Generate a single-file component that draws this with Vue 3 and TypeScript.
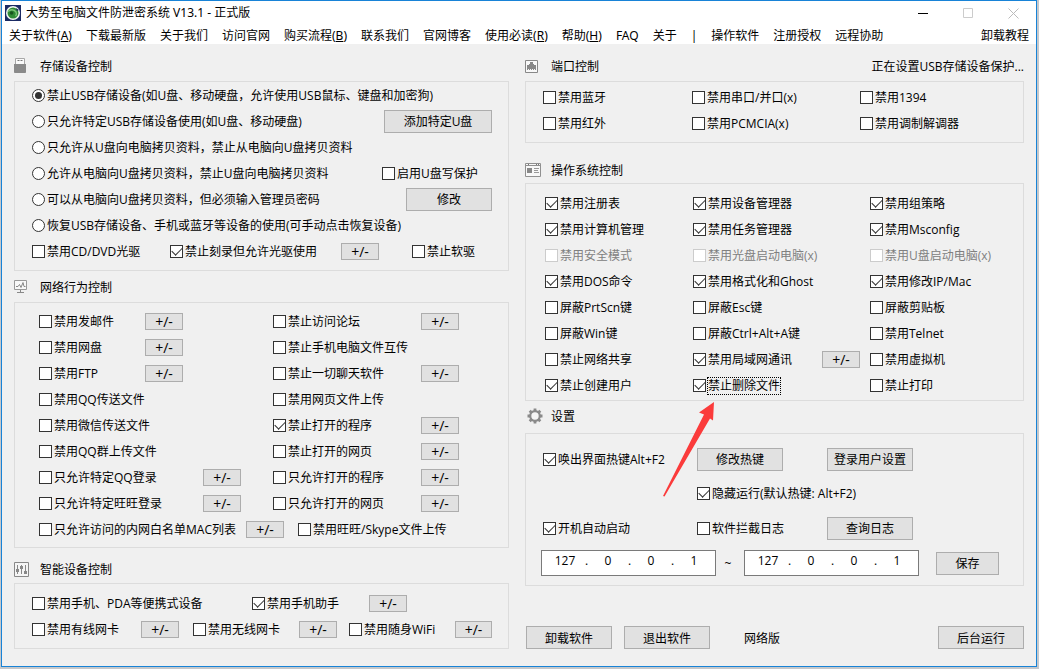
<script setup lang="ts">
import { reactive, ref } from 'vue'

type Kind = 'check' | 'radio' | 'mini' | 'button' | 'ip' | 'tilde'

interface Cell {
  kind: Kind
  label: string
  col: number
  checked: boolean
  disabled?: boolean
  marked?: boolean
  wide?: boolean
  octets?: string[]
}

interface Row {
  layout: string
  cells: Cell[]
}

interface Section {
  id: string
  icon: string
  title: string
  status?: string
  rows: Row[]
}

const check = (label: string, col = 1, checked = false, extra: Partial<Cell> = {}): Cell => ({
  kind: 'check',
  label,
  col,
  checked,
  ...extra,
})
const radio = (label: string): Cell => ({ kind: 'radio', label, col: 1, checked: false })
const mini = (col: number): Cell => ({ kind: 'mini', label: '+/-', col, checked: false })
const button = (label: string, col: number, wide = false): Cell => ({
  kind: 'button',
  label,
  col,
  checked: false,
  wide,
})
const ip = (label: string, col: number): Cell => ({
  kind: 'ip',
  label,
  col,
  checked: false,
  octets: ['127', '0', '0', '1'],
})
const row = (layout: string, ...cells: Cell[]): Row => ({ layout, cells })

const usbMode = ref('禁止USB存储设备(如U盘、移动硬盘，允许使用USB鼠标、键盘和加密狗)')

const columns = reactive<Section[][]>([
  [
    {
      id: 'storage',
      icon: 'usb',
      title: '存储设备控制',
      rows: [
        row('single', radio('禁止USB存储设备(如U盘、移动硬盘，允许使用USB鼠标、键盘和加密狗)')),
        row('trailing', radio('只允许特定USB存储设备使用(如U盘、移动硬盘)'), button('添加特定U盘', 2, true)),
        row('single', radio('只允许从U盘向电脑拷贝资料，禁止从电脑向U盘拷贝资料')),
        row('protect', radio('允许从电脑向U盘拷贝资料，禁止U盘向电脑拷贝资料'), check('启用U盘写保护', 2)),
        row('trailing', radio('可以从电脑向U盘拷贝资料，但必须输入管理员密码'), button('修改', 2)),
        row('single', radio('恢复USB存储设备、手机或蓝牙等设备的使用(可手动点击恢复设备)')),
        row('drives', check('禁用CD/DVD光驱'), check('禁止刻录但允许光驱使用', 2, true), mini(3), check('禁止软驱', 4)),
      ],
    },
    {
      id: 'network',
      icon: 'monitor',
      title: '网络行为控制',
      rows: [
        row('net', check('禁用发邮件'), mini(2), check('禁止访问论坛', 3), mini(4)),
        row('net', check('禁用网盘'), mini(2), check('禁止手机电脑文件互传', 3)),
        row('net', check('禁用FTP'), mini(2), check('禁止一切聊天软件', 3), mini(4)),
        row('net-wide', check('禁用QQ传送文件'), check('禁用网页文件上传', 3)),
        row('net-wide', check('禁用微信传送文件'), check('禁止打开的程序', 3, true), mini(4)),
        row('net-wide', check('禁用QQ群上传文件'), check('禁止打开的网页', 3), mini(4)),
        row('net-wide', check('只允许特定QQ登录'), mini(2), check('只允许打开的程序', 3), mini(4)),
        row('net-wide', check('只允许特定旺旺登录'), mini(2), check('只允许打开的网页', 3), mini(4)),
        row('net-mac', check('只允许访问的内网白名单MAC列表'), mini(2), check('禁用旺旺/Skype文件上传', 3)),
      ],
    },
    {
      id: 'smart',
      icon: 'sliders',
      title: '智能设备控制',
      rows: [
        row('phone', check('禁用手机、PDA等便携式设备'), check('禁用手机助手', 2, true), mini(3)),
        row('cards', check('禁用有线网卡'), mini(2), check('禁用无线网卡', 3), mini(4), check('禁用随身WiFi', 5), mini(6)),
      ],
    },
  ],
  [
    {
      id: 'ports',
      icon: 'port',
      title: '端口控制',
      status: '正在设置USB存储设备保护...',
      rows: [
        row('ports-row', check('禁用蓝牙'), check('禁用串口/并口(x)', 2), check('禁用1394', 3)),
        row('ports-row', check('禁用红外'), check('禁用PCMCIA(x)', 2), check('禁用调制解调器', 3)),
      ],
    },
    {
      id: 'system',
      icon: 'panel',
      title: '操作系统控制',
      rows: [
        row('os', check('禁用注册表', 1, true), check('禁用设备管理器', 2, true), check('禁用组策略', 4, true)),
        row('os', check('禁用计算机管理', 1, true), check('禁用任务管理器', 2, true), check('禁用Msconfig', 4, true)),
        row(
          'os',
          check('禁用安全模式', 1, false, { disabled: true }),
          check('禁用光盘启动电脑(x)', 2, false, { disabled: true }),
          check('禁用U盘启动电脑(x)', 4, false, { disabled: true }),
        ),
        row('os', check('禁用DOS命令', 1, true), check('禁用格式化和Ghost', 2, true), check('禁用修改IP/Mac', 4, true)),
        row('os', check('屏蔽PrtScn键'), check('屏蔽Esc键', 2), check('屏蔽剪贴板', 4)),
        row('os', check('屏蔽Win键'), check('屏蔽Ctrl+Alt+A键', 2), check('禁用Telnet', 4)),
        row('os', check('禁止网络共享'), check('禁用局域网通讯', 2, true), mini(3), check('禁用虚拟机', 4)),
        row('os', check('禁止创建用户', 1, true), check('禁止删除文件', 2, true, { marked: true }), check('禁止打印', 4)),
      ],
    },
    {
      id: 'settings',
      icon: 'gear',
      title: '设置',
      rows: [
        row('config', check('唤出界面热键Alt+F2', 1, true), button('修改热键', 2), button('登录用户设置', 3)),
        row('config', check('隐藏运行(默认热键: Alt+F2)', 2, true)),
        row('config tall', check('开机自动启动', 1, true), check('软件拦截日志', 2), button('查询日志', 3)),
        row(
          'range',
          ip('起始地址', 1),
          { kind: 'tilde', label: '~', col: 2, checked: false },
          ip('结束地址', 3),
          button('保存', 5),
        ),
      ],
    },
  ],
])

const menu: { text: string; key?: string }[] = [
  { text: '关于软件', key: 'A' },
  { text: '下载最新版' },
  { text: '关于我们' },
  { text: '访问官网' },
  { text: '购买流程', key: 'B' },
  { text: '联系我们' },
  { text: '官网博客' },
  { text: '使用必读', key: 'R' },
  { text: '帮助', key: 'H' },
  { text: 'FAQ' },
  { text: '关于' },
  { text: '|' },
  { text: '操作软件' },
  { text: '注册授权' },
  { text: '远程协助' },
]
</script>

<template>
  <div class="desktop">
    <div class="window">
      <header class="titlebar">
        <svg class="app-icon" width="16" height="16" viewBox="0 0 16 16">
          <rect width="16" height="16" fill="#1b2a63" />
          <circle cx="8" cy="8" r="7" fill="#f4f8f4" />
          <circle cx="8" cy="8" r="5.5" fill="#2f8a35" />
          <path d="M3 6.5C5 4 9 4 11 7c.8 1.5.6 3-.4 4.3" fill="none" stroke="#7fc47a" stroke-width="1.4" />
          <circle cx="6.6" cy="8" r="1.8" fill="#17551d" />
          <path d="M11 3l3 2-2 1z" fill="#1b2a63" />
        </svg>
        <h1>大势至电脑文件防泄密系统 V13.1 - 正式版</h1>
        <div class="controls">
          <button type="button" title="最小化">
            <svg width="11" height="11" viewBox="0 0 11 11"><path d="M0 5.5h10" stroke="#000" /></svg>
          </button>
          <button type="button" title="最大化" disabled>
            <svg width="11" height="11" viewBox="0 0 11 11"><path d="M.5.5h9v9h-9z" fill="none" stroke="#ccc" /></svg>
          </button>
          <button type="button" title="关闭">
            <svg width="11" height="11" viewBox="0 0 11 11"><path d="M.5.5l10 10M10.500.5l-10 10" stroke="#bbb" /></svg>
          </button>
        </div>
      </header>

      <nav class="menu">
        <template v-for="item in menu" :key="item.text">
          <span v-if="item.text === '|'">|</span>
          <a v-else href="#">{{ item.text }}<template v-if="item.key">(<u>{{ item.key }}</u>)</template></a>
        </template>
        <a class="last" href="#">卸载教程</a>
      </nav>

      <main class="content">
        <div v-for="(sections, c) in columns" :key="c" class="column">
          <section v-for="section in sections" :key="section.id" :class="section.id">
            <div class="heading">
              <span class="icon">
                <svg v-if="section.icon === 'usb'" width="12" height="16" viewBox="0 0 12 16">
                  <path d="M1.500 6V.5h9V6" fill="#fafafa" stroke="#a8a8a8" />
                  <path d="M3.500 2.500h2M6.500 2.500h2" stroke="#777" />
                  <path d="M0 6h12v8.500l-.8.500H.8L0 14.500z" fill="#8a8a8a" />
                </svg>
                <svg v-else-if="section.icon === 'monitor'" width="14" height="14" viewBox="0 0 14 14">
                  <path d="M.5.5h12v9H.5z" fill="#f8f8f8" stroke="#999" />
                  <path d="M2 6.500h2L5.500 4.500 7 7.500 9 2.500l1 4h1.500" fill="none" stroke="#888" />
                  <path d="M6.500 10v2M3 12.500h7" stroke="#888" />
                </svg>
                <svg v-else-if="section.icon === 'sliders'" width="15" height="15" viewBox="0 0 15 15">
                  <path d="M.5.5h14v14H.5z" fill="#f5f5f5" stroke="#888" />
                  <path d="M3.500 3v9M7.500 3v9M11.500 3v9" stroke="#888" />
                  <path d="M2 7h3v3H2zM6 4h3v3H6zM10 9h3v3h-3z" fill="#888" />
                </svg>
                <svg v-else-if="section.icon === 'port'" width="13" height="13" viewBox="0 0 13 13">
                  <path d="M.5.5h12v12H.5z" fill="#f8f8f8" stroke="#888" />
                  <path d="M2 10V5h2V4h1V2h3v2h1v1h2v5h-1V9H9v1H8V9H7v1H6V9H5v1H4V9H3v1z" fill="#888" />
                </svg>
                <svg v-else-if="section.icon === 'panel'" width="16" height="14" viewBox="0 0 16 14">
                  <path d="M.5.5h15v13H.5z" fill="#f8f8f8" stroke="#909090" />
                  <path d="M1 2.500h14" stroke="#909090" />
                  <path d="M3 1.500h1M11 1.500h1M13 1.500h1" stroke="#777" />
                  <path d="M2 5h5v5H2z" fill="#888" />
                  <path d="M9 5.500h5M9 7.500h4M9 9.500h5" stroke="#999" />
                </svg>
                <svg v-else width="18" height="16" viewBox="-2 0 18 16">
                  <circle cx="8" cy="8" r="4.800" fill="#f5f5f5" stroke="#8a8a8a" stroke-width="2.200" />
                  <path
                    d="M8 .5v2.500M8 13v2.500M.5 8h2.500M13 8h2.500M2.700 2.700l2 2M11.300 11.300l2 2M2.700 13.300l2-2M11.300 4.700l2-2"
                    stroke="#8a8a8a"
                    stroke-width="2.800"
                  />
                </svg>
              </span>
              <h2>{{ section.title }}</h2>
              <p v-if="section.status" class="status">{{ section.status }}</p>
            </div>

            <div class="box">
              <div v-for="(line, r) in section.rows" :key="r" class="row" :class="line.layout">
                <div
                  v-for="cell in line.cells"
                  :key="cell.label + cell.col"
                  class="cell"
                  :class="['col-' + cell.col, { marked: cell.marked }]"
                >
                  <label v-if="cell.kind === 'check'" :class="{ off: cell.disabled }">
                    <input v-model="cell.checked" type="checkbox" :disabled="cell.disabled" />
                    <span>{{ cell.label }}</span>
                  </label>
                  <label v-else-if="cell.kind === 'radio'">
                    <input v-model="usbMode" type="radio" name="usb-mode" :value="cell.label" />
                    <span>{{ cell.label }}</span>
                  </label>
                  <button v-else-if="cell.kind === 'mini'" type="button" class="mini">{{ cell.label }}</button>
                  <button v-else-if="cell.kind === 'button'" type="button" class="push" :class="{ wide: cell.wide }">
                    {{ cell.label }}
                  </button>
                  <div v-else-if="cell.kind === 'ip' && cell.octets" class="ip" role="group" :aria-label="cell.label">
                    <template v-for="(_, i) in cell.octets" :key="i">
                      <span v-if="i > 0">.</span>
                      <input v-model="cell.octets[i]" type="text" maxlength="3" :aria-label="cell.label + (i + 1)" />
                    </template>
                  </div>
                  <span v-else class="tilde">{{ cell.label }}</span>
                  <svg v-if="cell.marked" class="arrow" width="54" height="98" viewBox="0 0 54 98">
                    <path d="M51 1L36 11.500l5 2L0 95l1.500.5L47 17.500l3 2z" fill="#fb3b3b" />
                  </svg>
                </div>
              </div>
            </div>
          </section>

          <footer v-if="c === 1" class="actions">
            <button type="button" class="push">卸载软件</button>
            <button type="button" class="push">退出软件</button>
            <span>网络版</span>
            <button type="button" class="push end">后台运行</button>
          </footer>
        </div>
      </main>
    </div>
  </div>
</template>

<style>
body {
  background: #c6c8cb;
}
</style>

<style scoped>
* {
  box-sizing: border-box;
}

.desktop {
  padding: 0 2px 2px 1px;
  font-family: 'Open Sans', 'Noto Sans CJK SC', sans-serif;
  font-size: 12px;
  line-height: 16px;
  color: #000;
}

.window {
  min-width: 1000px;
  border: 1px solid #1883d7;
  background: #f0f0f0;
  white-space: nowrap;
}

h1,
h2,
p {
  margin: 0;
  font-size: 12px;
  font-weight: 400;
}

button,
input {
  margin: 0;
  padding: 0;
  font: inherit;
  color: inherit;
}

.titlebar,
.menu {
  font-family: 'Noto Sans', 'Noto Sans CJK SC', sans-serif;
}

.titlebar {
  display: flex;
  align-items: center;
  height: 24px;
  padding-left: 3px;
  background: #fff;
}

.app-icon {
  margin-right: 5px;
}

.controls {
  display: flex;
  margin-left: auto;
}

.controls button {
  display: flex;
  align-items: center;
  justify-content: center;
  width: 45px;
  height: 24px;
  border: 0;
  background: none;
}

.menu {
  display: flex;
  align-items: center;
  gap: 14px;
  height: 19px;
  padding: 2px 7px 0;
  background: #fff;
}

.menu a {
  color: #000;
  text-decoration: none;
}

.menu .last {
  margin-left: auto;
}

.content {
  display: grid;
  grid-template-columns: 495fr 499fr;
  gap: 16px;
  padding: 7px 12px 17px;
}

.column {
  display: flex;
  flex-direction: column;
}

.heading {
  display: flex;
  align-items: center;
  height: 30px;
}

.heading h2,
.heading .status {
  padding-top: 2px;
}

.network .heading {
  margin-top: 1px;
}

.smart .heading {
  height: 28px;
  margin-top: 7px;
}

.system .heading {
  height: 26px;
  margin-top: 14px;
}

.settings .heading {
  margin-bottom: 2px;
}

.icon {
  display: flex;
  width: 26px;
}

.status {
  margin-left: auto;
}

.box {
  border: 1px solid #dcdcdc;
}

.storage .box {
  padding: 0 16px 6px 17px;
}

.network .box {
  padding: 5px 16px 5px 24px;
}

.smart .box {
  padding: 6px 16px 6px 17px;
}

.ports .box {
  padding: 2px 12px 6px 17px;
}

.system .box {
  padding: 6px 12px 2px 19px;
}

.settings .box {
  padding: 8px 12px 5px 15px;
}

.row {
  display: grid;
  height: 26px;
}

.cell {
  display: flex;
  align-items: center;
  min-width: 0;
}

.col-1 { grid-column: 1; }
.col-2 { grid-column: 2; }
.col-3 { grid-column: 3; }
.col-4 { grid-column: 4; }
.col-5 { grid-column: 5; }
.col-6 { grid-column: 6; }

.single { grid-template-columns: 1fr; }
.trailing { grid-template-columns: 1fr auto; }
.protect { grid-template-columns: 350fr 110fr; }
.drives { grid-template-columns: 138fr 171fr 71fr 80fr; }
.net { grid-template-columns: 106fr 128fr 148fr 71fr; }
.net-wide { grid-template-columns: 164fr 70fr 148fr 71fr; }
.net-mac { grid-template-columns: 207fr 52fr 194fr; }
.phone { grid-template-columns: 220fr 117fr 123fr; }
.cards { grid-template-columns: 109fr 52fr 106fr 50fr 106fr 37fr; }
.ports-row { grid-template-columns: 149fr 168fr 151fr; }
.os { grid-template-columns: 148fr 129fr 48fr 141fr; }

.config {
  grid-template-columns: 154fr 130fr 184fr;
  height: 34px;
  padding-left: 2px;
}

.tall {
  height: 36px;
}

.range {
  grid-template-columns: 175fr 28fr 175fr 17fr 75fr;
  height: 34px;
}

label {
  display: flex;
  align-items: center;
  gap: 2px;
}

label span {
  margin-top: 2px;
}

label input {
  display: grid;
  flex: none;
  place-content: center;
  width: 13px;
  height: 13px;
  border: 1px solid #333;
  background: #fff;
  appearance: none;
}

input[type='radio'] {
  border-radius: 50%;
}

input[type='radio']:checked::before {
  width: 7px;
  height: 7px;
  border-radius: 50%;
  background: #333;
  content: '';
}

input[type='checkbox']:checked::before {
  width: 9px;
  height: 5px;
  margin-bottom: 3px;
  border: solid #333;
  border-width: 0 0 1px 1px;
  transform: rotate(-45deg);
  content: '';
}

label input:disabled {
  border-color: #ccc;
}

.off {
  color: #808080;
}

.marked {
  position: relative;
}

.marked label span {
  outline: 1px dotted #000;
}

.arrow {
  position: absolute;
  top: 29px;
  left: -30px;
  z-index: 1;
  pointer-events: none;
}

.push,
.mini {
  border: 1px solid #adadad;
  background: #e1e1e1;
  text-align: center;
}

.push {
  width: 86px;
  height: 23px;
  padding-top: 2px;
}

.push.wide {
  width: 108px;
}

.mini {
  width: 38px;
  height: 17px;
  padding-top: 1px;
  font-size: 14px;
  line-height: 14px;
}

.range .push {
  width: 63px;
}

.ip {
  display: flex;
  align-items: center;
  width: 100%;
  height: 26px;
  padding: 0 1px 4px 3px;
  border: 1px solid #7a7a7a;
  background: #fff;
}

.ip input {
  flex: 1;
  width: 0;
  height: 16px;
  border: 0;
  background: none;
  text-align: center;
  outline: none;
}

.ip span {
  width: 3px;
}

.tilde {
  width: 100%;
  padding: 2px 4px 0 0;
  text-align: center;
}

.actions {
  display: flex;
  align-items: center;
  gap: 12px;
  margin-top: auto;
  padding-left: 1px;
}

.actions span {
  margin-left: 22px;
  padding-top: 2px;
}

.actions .end {
  margin-left: auto;
}
</style>
